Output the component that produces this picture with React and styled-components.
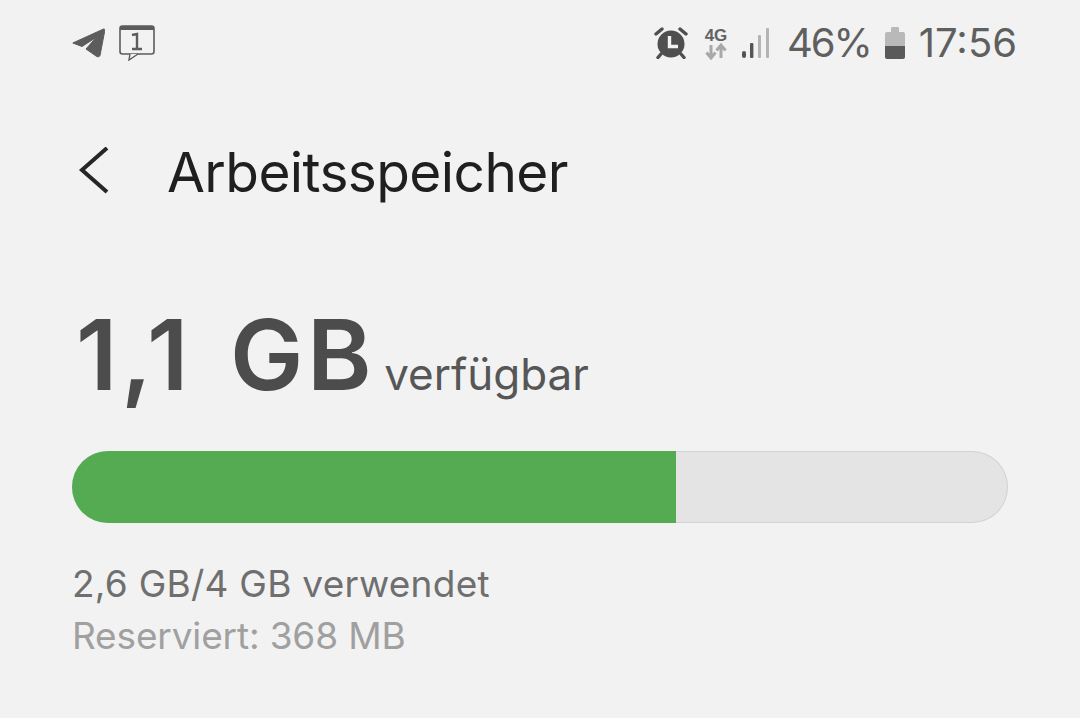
import styled, { createGlobalStyle } from 'styled-components'

const GlobalStyle = createGlobalStyle`
  html, body {
    margin: 0;
    background: #f2f2f2;
    font-family: Inter, "Liberation Sans", Arial, sans-serif;
  }
`;

const Page = styled.div`
  width: 1080px;
  height: 718px;
  overflow: hidden;
  background: #f2f2f2;
  display: flex;
  flex-direction: column;
`;

const StatusBar = styled.div`
  height: 86px;
  padding: 0 63px 0 72px;
  display: flex;
  align-items: center;
  justify-content: space-between;
`;

const StatusGroup = styled.div`
  display: flex;
  align-items: center;
`;

const StatusText = styled.span`
  font-size: 40px;
  line-height: 48px;
  color: #5f5f5f;
  letter-spacing: ${(p) => p.$spacing || 0}px;
  margin-left: ${(p) => p.$left || 0}px;
`;

const IconSlot = styled.span`
  display: flex;
  margin-left: ${(p) => p.$left || 0}px;
`;

const Header = styled.div`
  height: 74px;
  margin-top: 49px;
  padding-left: 78px;
  display: flex;
  align-items: center;
  gap: 57px;
`;

const Title = styled.h1`
  margin: 0;
  font-size: 55px;
  font-weight: 400;
  line-height: 60px;
  letter-spacing: -0.6px;
  color: #1f1f1f;
`;

const Content = styled.div`
  padding: 0 72px;
  display: flex;
  flex-direction: column;
`;

const Available = styled.div`
  margin-top: 93px;
  height: 106px;
  padding-left: 4px;
  display: flex;
  align-items: baseline;
  color: #4c4c4c;
`;

const Amount = styled.span`
  font-size: 98px;
  line-height: 106px;
  font-weight: 600;
  letter-spacing: 3.5px;
  word-spacing: 10px;
  color: #4c4c4c;
`;

const AmountLabel = styled.span`
  font-size: 44px;
  line-height: 52px;
  margin-left: 9px;
  color: #565656;
`;

const Track = styled.div`
  margin-top: 43px;
  width: 936px;
  height: 72px;
  border-radius: 36px;
  box-shadow: inset 0 0 0 1px #d3d3d3;
  background: #e4e4e4;
  overflow: hidden;
`;

const Fill = styled.div`
  height: 100%;
  background: #55ab52;
`;

const UsedLine = styled.div`
  margin-top: 37px;
  font-size: 37px;
  line-height: 48px;
  letter-spacing: 0.25px;
  color: #6f6f6f;
`;

const ReservedLine = styled.div`
  margin-top: 4px;
  font-size: 37px;
  line-height: 48px;
  letter-spacing: -0.15px;
  color: #a0a0a0;
`;

const TelegramIcon = () => (
  <svg width="33" height="30" viewBox="0 0 33 30" style={{ display: 'block' }}>
    <path d="M0.8 15 L31.5 1 C32.5 0.8 33 1.5 32.8 2.5 L28 27.5 C27.5 29 25.5 29.3 24 28 L14 21 L24 9.5 L10 18.5 Z" fill="#5c5c5c" stroke="#5c5c5c" strokeWidth="1" strokeLinejoin="round" />
  </svg>
);

const MessageIcon = () => (
  <svg width="36" height="36" viewBox="0 0 36 36" style={{ display: 'block' }}>
    <rect x="1" y="1" width="34" height="28" rx="2.5" fill="none" stroke="#5c5c5c" strokeWidth="1.6" />
    <rect x="1" y="1" width="34" height="4" fill="#5c5c5c" />
    <path d="M11 29 L10 35 L19 29" fill="#f2f2f2" stroke="#5c5c5c" strokeWidth="1.4" />
    <path d="M13 10 L18 9 L18 24 M13 24 L23 24" fill="none" stroke="#5c5c5c" strokeWidth="2.4" />
  </svg>
);

const AlarmIcon = () => (
  <svg width="34" height="32" viewBox="0 0 34 32" style={{ display: 'block' }}>
    <circle cx="17" cy="17" r="13.5" fill="#4f4f4f" />
    <path d="M2 7 L8 2 M32 7 L26 2 M7 27 L4 30.5 M27 27 L30 30.5" stroke="#4f4f4f" strokeWidth="3.4" strokeLinecap="round" />
    <path d="M15.5 9 V19.5 H24" fill="none" stroke="#f2f2f2" strokeWidth="3.4" />
  </svg>
);

const NetworkIcon = () => (
  <svg width="24" height="34" viewBox="0 0 24 34" style={{ display: 'block' }}>
    <path d="M7 19 V32 M2.5 26.5 L7 32 L11.5 26.5" fill="none" stroke="#a8a8a8" strokeWidth="3" />
    <path d="M17 32 V19 M12.5 24.5 L17 19 L21.5 24.5" fill="none" stroke="#a8a8a8" strokeWidth="3" />
    <text x="12" y="15" textAnchor="middle" fontFamily="Liberation Sans" fontWeight="700" fontSize="17" fill="#636363">4G</text>
  </svg>
);

const SignalIcon = () => (
  <svg width="27" height="30" viewBox="0 0 27 30" style={{ display: 'block' }}>
    <rect x="0" y="23" width="4" height="7" rx="2" fill="#555555" />
    <rect x="8" y="15" width="3.4" height="15" rx="1" fill="#555555" />
    <rect x="16" y="7" width="3" height="23" rx="1" fill="#b4b4b4" />
    <rect x="24" y="0" width="3" height="30" rx="1" fill="#b4b4b4" />
  </svg>
);

const BatteryIcon = () => (
  <svg width="20" height="32" viewBox="0 0 20 32" style={{ display: 'block' }}>
    <rect x="6" y="0" width="8" height="6" rx="1" fill="#b9b9b9" />
    <rect x="0" y="5" width="20" height="20" rx="2" fill="#b9b9b9" />
    <path d="M0 19 H20 V30 Q20 32 18 32 H2 Q0 32 0 30 Z" fill="#5a5a5a" />
  </svg>
);

const BackIcon = () => (
  <svg width="32" height="50" viewBox="0 0 32 50" style={{ display: 'block' }}>
    <path d="M29 1 L4 23 L29 45" fill="none" stroke="#262626" strokeWidth="4" />
  </svg>
);

export default function App() {
  return (
    <Page>
      <GlobalStyle />
      <StatusBar>
        <StatusGroup>
          <TelegramIcon />
          <IconSlot $left={14}><MessageIcon /></IconSlot>
        </StatusGroup>
        <StatusGroup>
          <AlarmIcon />
          <IconSlot $left={16}><NetworkIcon /></IconSlot>
          <IconSlot $left={14}><SignalIcon /></IconSlot>
          <StatusText $left={18} $spacing={-2}>46%</StatusText>
          <IconSlot $left={14}><BatteryIcon /></IconSlot>
          <StatusText $left={14}>17:56</StatusText>
        </StatusGroup>
      </StatusBar>
      <Header>
        <BackIcon />
        <Title>Arbeitsspeicher</Title>
      </Header>
      <Content>
        <Available>
          <Amount>1,1 GB</Amount>
          <AmountLabel>verfügbar</AmountLabel>
        </Available>
        <Track>
          <Fill style={{ width: `${(604 / 936) * 100}%` }} />
        </Track>
        <UsedLine>2,6 GB/4 GB verwendet</UsedLine>
        <ReservedLine>Reserviert: 368 MB</ReservedLine>
      </Content>
    </Page>
  );
}
